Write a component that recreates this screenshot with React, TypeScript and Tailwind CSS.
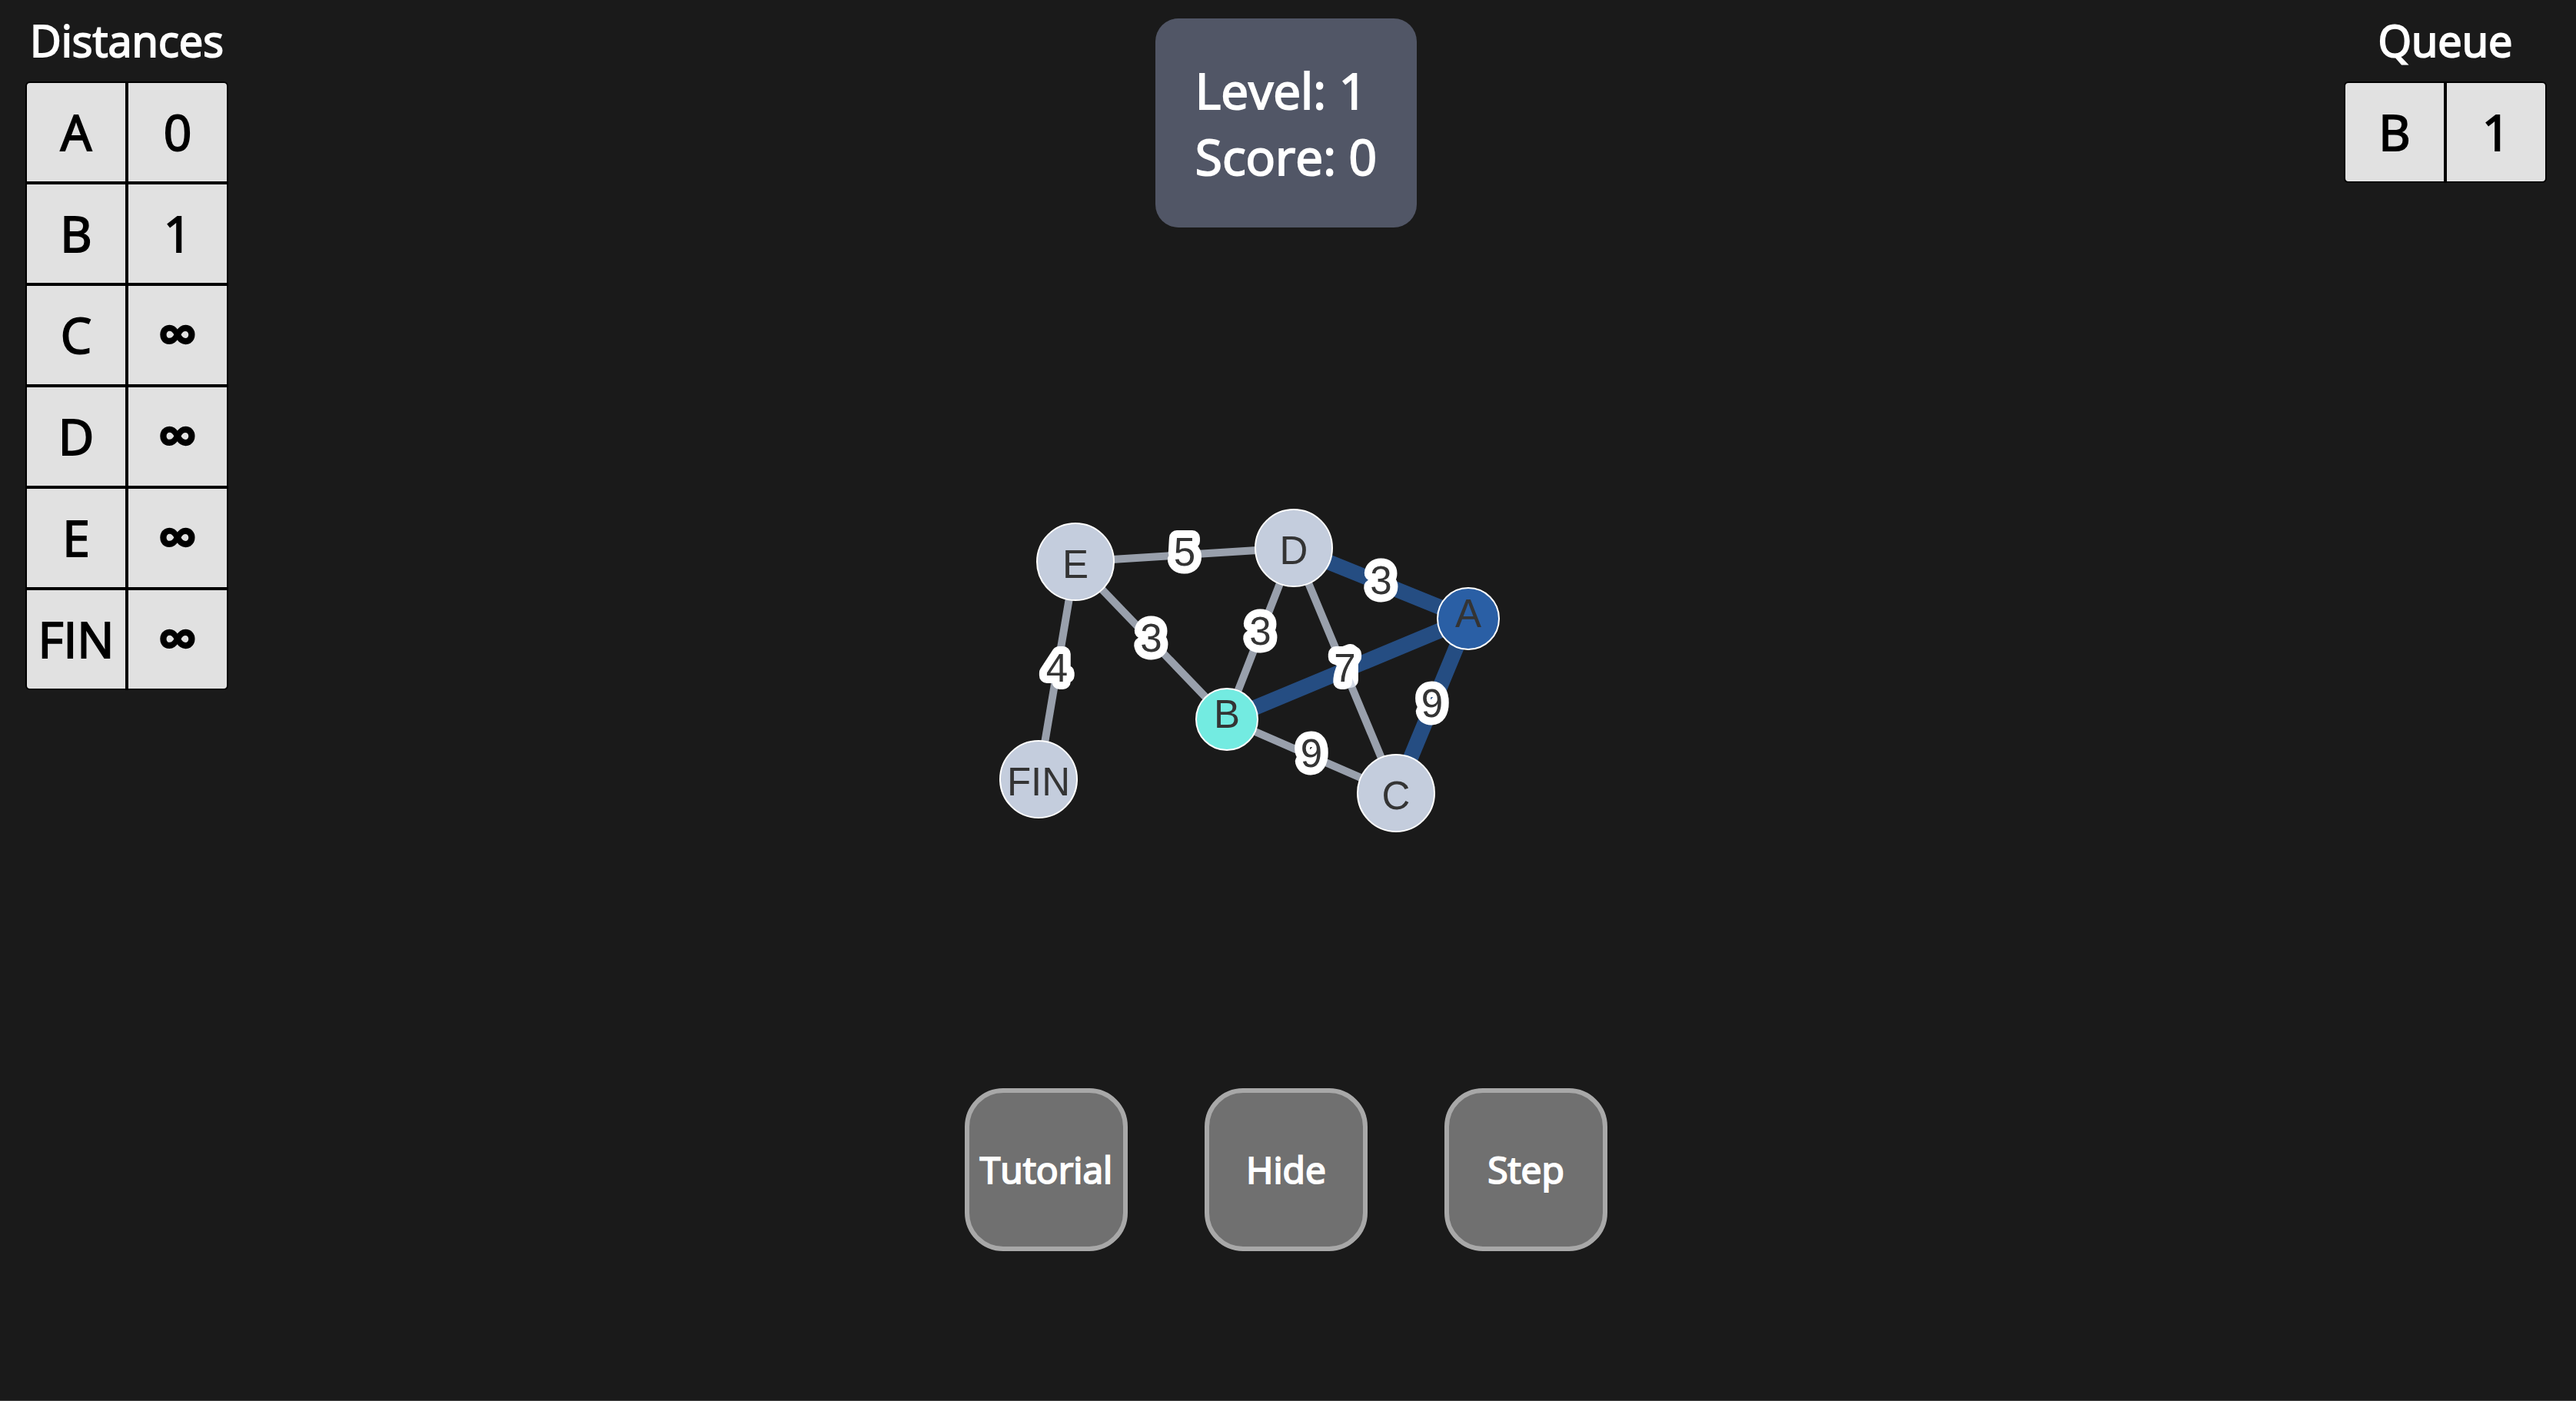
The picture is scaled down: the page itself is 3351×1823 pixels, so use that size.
type Entry = { name: string; value: string };

const distances: Entry[] = [
  { name: "A", value: "0" },
  { name: "B", value: "1" },
  { name: "C", value: "∞" },
  { name: "D", value: "∞" },
  { name: "E", value: "∞" },
  { name: "FIN", value: "∞" },
];

const queue: Entry[] = [{ name: "B", value: "1" }];

const VISITED = "#2a5fa5";
const CURRENT = "#73ebe1";
const IDLE = "#c4cddd";

type GraphNode = { x: number; y: number; fill: string; r: number; baseline: number };

const nodes: Record<string, GraphNode> = {
  A: { x: 637, y: 155, fill: VISITED, r: 40, baseline: 11 },
  B: { x: 323, y: 286, fill: CURRENT, r: 40, baseline: 11 },
  C: { x: 543, y: 382, fill: IDLE, r: 50, baseline: 21 },
  D: { x: 410, y: 63, fill: IDLE, r: 50, baseline: 21 },
  E: { x: 126, y: 81, fill: IDLE, r: 50, baseline: 21 },
  FIN: { x: 78, y: 364, fill: IDLE, r: 50, baseline: 21 },
};

const edges = [
  { from: "A", to: "B", weight: 1, visited: true },
  { from: "A", to: "C", weight: 9, visited: true },
  { from: "A", to: "D", weight: 3, visited: true },
  { from: "B", to: "C", weight: 9, visited: false },
  { from: "B", to: "D", weight: 3, visited: false },
  { from: "B", to: "E", weight: 3, visited: false },
  { from: "C", to: "D", weight: 7, visited: false },
  { from: "D", to: "E", weight: 5, visited: false },
  { from: "E", to: "FIN", weight: 4, visited: false },
];

function EntryTable({ title, entries }: { title: string; entries: Entry[] }) {
  return (
    <table className="border-separate border-spacing-0">
      <caption className="pb-4 text-[56px] leading-[76px] text-white [-webkit-text-stroke:2px_white]">
        {title}
      </caption>
      <tbody className="text-[64px] leading-none text-black [-webkit-text-stroke:2px_black] [&>tr:first-child>:first-child]:rounded-tl-md [&>tr:first-child>:last-child]:rounded-tr-md [&>tr:last-child>:first-child]:rounded-bl-md [&>tr:last-child>:last-child]:rounded-br-md">
        {entries.map((e) => (
          <tr key={e.name}>
            <th scope="row" className="h-[132px] w-[132px] min-w-[132px] border-2 border-black bg-[#e1e1e1] p-0 text-center font-normal">
              {e.name}
            </th>
            <td className="h-[132px] w-[132px] min-w-[132px] border-2 border-black bg-[#e1e1e1] p-0 text-center">
              {e.value === "∞" ? (
                <span className="text-[70px] leading-[0] [-webkit-text-stroke:4px_black]">∞</span>
              ) : (
                e.value
              )}
            </td>
          </tr>
        ))}
      </tbody>
    </table>
  );
}

function Graph() {
  return (
    <svg
      viewBox="0 0 800 450"
      className="mt-[354px] h-[450px] w-[800px] font-['Liberation_Sans',Arial,sans-serif] text-[51px]"
      role="img"
      aria-label="Weighted graph"
    >
      {edges.map((e) => {
        const a = nodes[e.from];
        const b = nodes[e.to];
        return (
          <g key={e.from + e.to}>
            <line
              x1={a.x}
              y1={a.y}
              x2={b.x}
              y2={b.y}
              stroke={e.visited ? VISITED : IDLE}
              strokeWidth={e.visited ? 20 : 10}
              strokeOpacity={0.75}
            />
            <text
              x={(a.x + b.x) / 2}
              y={(a.y + b.y) / 2 + 14}
              className={e.weight === 1 ? "font-['Roboto',sans-serif]" : undefined}
              textAnchor="middle"
              fill="#343434"
              stroke="#ffffff"
              strokeWidth={20}
              strokeLinejoin="round"
              paintOrder="stroke"
            >
              {e.weight}
            </text>
          </g>
        );
      })}
      {Object.entries(nodes).map(([name, n]) => (
        <g key={name}>
          <circle cx={n.x} cy={n.y} r={n.r} fill={n.fill} stroke="#ffffff" strokeWidth={2} />
          <text x={n.x} y={n.y + n.baseline} textAnchor="middle" fill="#343434">
            {name}
          </text>
        </g>
      ))}
    </svg>
  );
}

export default function App() {
  return (
    <div className="min-h-screen border-b border-[#444444] bg-[#1a1a1a] pr-[5px] font-['Open_Sans','Noto_Sans',sans-serif]">
      <main className="grid grid-cols-[1fr_auto_1fr] items-start px-[33px]">
        <aside className="justify-self-start pt-[14px]">
          <EntryTable title="Distances" entries={distances} />
        </aside>
        <section className="flex flex-col items-center pt-6">
          <div className="rounded-[30px] bg-[#515666] px-[52px] pt-[51px] pb-[49px] text-[64px] leading-[86px] text-white [-webkit-text-stroke:2px_white]">
            <p>Level: 1</p>
            <p>Score: 0</p>
          </div>
          <Graph />
          <div className="mt-[316px] flex gap-[100px]">
            {["Tutorial", "Hide", "Step"].map((label) => (
              <button
                key={label}
                type="button"
                className="flex size-[212px] items-center justify-center rounded-[50px] border-[6px] border-[#a8a8a8] bg-[#707070] text-[48px] leading-none text-white [-webkit-text-stroke:2px_white]"
              >
                {label}
              </button>
            ))}
          </div>
        </section>
        <aside className="justify-self-end pt-[14px]">
          <EntryTable title="Queue" entries={queue} />
        </aside>
      </main>
    </div>
  );
}
